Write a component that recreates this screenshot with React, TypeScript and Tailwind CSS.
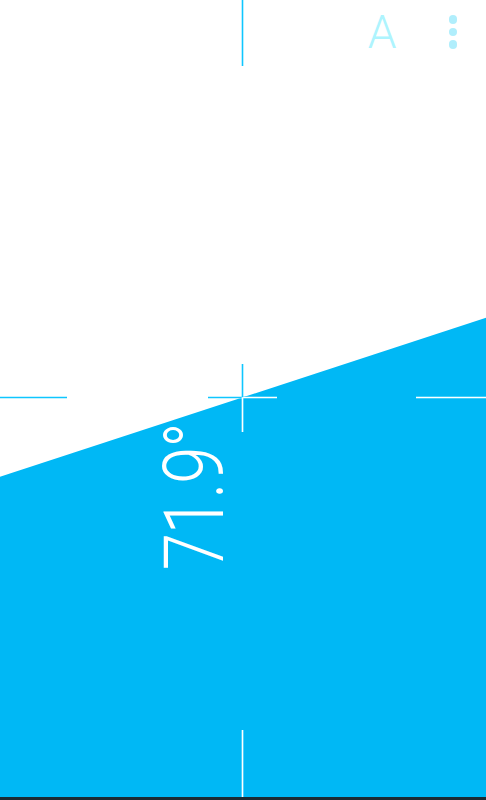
export default function App() {
  const blue = '#00b8f5'
  const line = '#0fc6ff'
  const edge = 'M0 476.7 L486 317.8 L486 797 L0 797 Z'

  // crosshair segments: [x1, y1, x2, y2]
  const marks: [number, number, number, number][] = [
    [242.5, 0, 242.5, 66],
    [242.5, 730, 242.5, 797],
    [0, 397.5, 67, 397.5],
    [416, 397.5, 486, 397.5],
    [208, 397.5, 277, 397.5],
    [242.5, 364, 242.5, 432],
  ]

  return (
    <div className="relative w-[486px] h-[800px] overflow-hidden bg-white">
      <svg width="486" height="800" viewBox="0 0 486 800" className="block">
        <defs>
          <clipPath id="tilt">
            <path d={edge} />
          </clipPath>
        </defs>
        <path d={edge} fill={blue} />
        {marks.map((m, i) => (
          <line key={i} x1={m[0]} y1={m[1]} x2={m[2]} y2={m[3]} stroke={line} strokeWidth="1.6" />
        ))}
        <g clipPath="url(#tilt)">
          {marks.map((m, i) => (
            <line key={i} x1={m[0]} y1={m[1]} x2={m[2]} y2={m[3]} stroke="#ffffff" strokeWidth="1.6" />
          ))}
        </g>
        <rect x="0" y="797" width="486" height="3" fill="#1b2b33" />
      </svg>

      {/* angle readout */}
      <div
        className="absolute left-[195px] top-[497px] -translate-x-1/2 -translate-y-1/2 -rotate-90 scale-x-[0.8] whitespace-nowrap text-white text-[84px] leading-none font-light tracking-[-0.02em]"
        style={{ fontFamily: 'Roboto, "Noto Sans", sans-serif' }}
      >
        71.9°
      </div>

      {/* top right controls */}
      <div className="absolute top-0 right-0 flex items-center gap-[52px] pr-[29px] pt-[4px] h-[60px]">
        <span
          className="text-[46px] leading-none font-light text-[#aef4fe]"
          style={{ fontFamily: 'Roboto, "Noto Sans", sans-serif' }}
        >
          A
        </span>
        <div className="flex flex-col gap-[4px]">
          <span className="w-[8.5px] h-[8.5px] rounded-full bg-[#b0eefc]" />
          <span className="w-[8.5px] h-[8.5px] rounded-full bg-[#b0eefc]" />
          <span className="w-[8.5px] h-[8.5px] rounded-full bg-[#b0eefc]" />
        </div>
      </div>
    </div>
  )
}
